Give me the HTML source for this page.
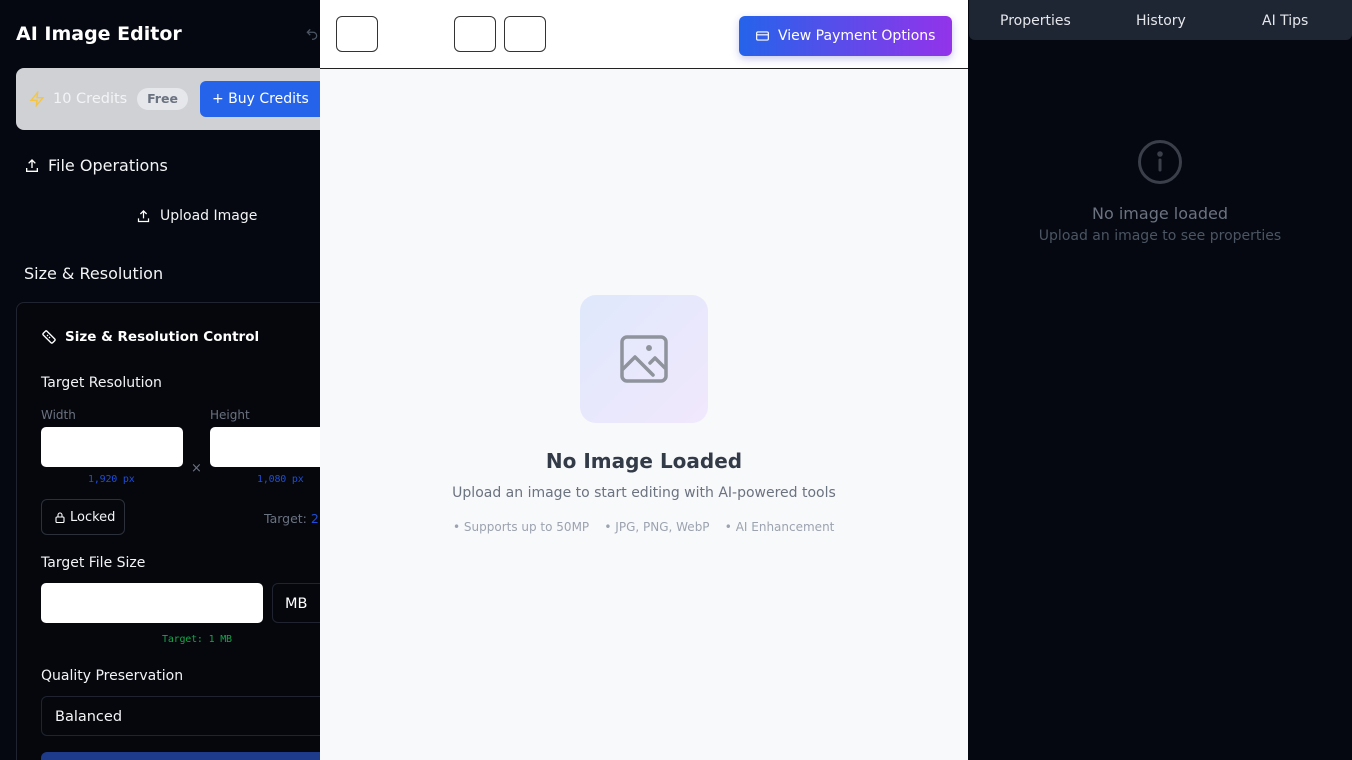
<!DOCTYPE html>
<html style="overflow:hidden;width:1352px;height:760px"><head><meta charset="utf-8"><style>
*{box-sizing:border-box;margin:0;padding:0}
body{width:1352px;height:760px;overflow:hidden;background:#050810;font-family:"DejaVu Sans","Liberation Sans",sans-serif;position:relative;color:#e5e7eb}
.a{position:absolute;white-space:nowrap}
#left{position:absolute;left:0;top:0;width:320px;height:760px;overflow:hidden}
</style></head><body>
<div id="left">
<div class="a" style="left:16px;top:23px;font-size:19px;font-weight:bold;color:#fff">AI Image Editor</div>
<svg class="a" style="left:305px;top:27px" width="14" height="14" viewBox="0 0 24 24" fill="none" stroke="#4b5563" stroke-width="2.2"><path d="M9 14L4 9l5-5"/><path d="M4 9h10a6 6 0 010 12h-2"/></svg>
<div class="a" style="left:16px;top:68px;width:330px;height:62px;background:#cfd1d5;border-radius:8px"></div>
<svg class="a" style="left:29px;top:91px" width="16" height="16" viewBox="0 0 24 24" fill="none" stroke="#f5c542" stroke-width="2"><path d="M13 2L3 14h9l-1 8 10-12h-9l1-8z"/></svg>
<div class="a" style="left:53px;top:91px;font-size:14.5px;color:#f3f4f6">10 Credits</div>
<div class="a" style="left:137px;top:88px;width:51px;height:22px;border-radius:11px;background:#e5e7eb;color:#6b7280;font-size:12.5px;font-weight:bold;text-align:center;line-height:22px">Free</div>
<div class="a" style="left:200px;top:81px;width:140px;height:36px;border-radius:6px;background:#2563eb;color:#fff;font-size:14px;line-height:36px;padding-left:12px">+ Buy Credits</div>
<svg class="a" style="left:24px;top:158px" width="16" height="16" viewBox="0 0 24 24" fill="none" stroke="#fff" stroke-width="2"><path d="M12 15V3M7 8l5-5 5 5M4 15v5h16v-5"/></svg>
<div class="a" style="left:48px;top:156px;font-size:16px;color:#f3f4f6">File Operations</div>
<svg class="a" style="left:136px;top:209px" width="15" height="15" viewBox="0 0 24 24" fill="none" stroke="#fff" stroke-width="2"><path d="M12 15V3M7 8l5-5 5 5M4 15v5h16v-5"/></svg>
<div class="a" style="left:160px;top:208px;font-size:14px;color:#f3f4f6">Upload Image</div>
<div class="a" style="left:24px;top:264px;font-size:16px;color:#f3f4f6">Size &amp; Resolution</div>
<div class="a" style="left:16px;top:302px;width:330px;height:480px;border:1px solid #1f2430;border-radius:8px;background:#05070d"></div>
<svg class="a" style="left:41px;top:329px" width="16" height="16" viewBox="0 0 24 24" fill="none" stroke="#fff" stroke-width="2"><rect x="2" y="8" width="20" height="8" rx="2" transform="rotate(45 12 12)"/><path d="M9 9l1.5 1.5M12 12l1.5 1.5"/></svg>
<div class="a" style="left:65px;top:329px;font-size:13.5px;font-weight:bold;color:#fff">Size &amp; Resolution Control</div>
<div class="a" style="left:41px;top:375px;font-size:14px;color:#f3f4f6">Target Resolution</div>
<div class="a" style="left:41px;top:408px;font-size:12px;color:#6b7280">Width</div>
<div class="a" style="left:210px;top:408px;font-size:12px;color:#6b7280">Height</div>
<div class="a" style="left:41px;top:427px;width:142px;height:40px;background:#fff;border-radius:5px"></div>
<div class="a" style="left:210px;top:427px;width:130px;height:40px;background:#fff;border-radius:5px"></div>
<div class="a" style="left:191px;top:461px;font-size:13px;color:#6b7280">×</div>
<div class="a" style="left:88px;top:474px;font-size:10px;color:#1d4ed8;font-family:'DejaVu Sans Mono',monospace;letter-spacing:-0.2px">1,920 px</div>
<div class="a" style="left:257px;top:474px;font-size:10px;color:#1d4ed8;font-family:'DejaVu Sans Mono',monospace;letter-spacing:-0.2px">1,080 px</div>
<div class="a" style="left:41px;top:499px;width:84px;height:36px;border:1px solid #2b303b;border-radius:6px"></div>
<svg class="a" style="left:54px;top:511px" width="12" height="13" viewBox="0 0 24 24" fill="none" stroke="#fff" stroke-width="2.2"><rect x="4" y="11" width="16" height="11" rx="2"/><path d="M8 11V7a4 4 0 018 0v4"/></svg>
<div class="a" style="left:70px;top:510px;font-size:13px;color:#f3f4f6">Locked</div>
<div class="a" style="left:264px;top:511px;font-size:12.5px;color:#6b7280">Target: <span style="color:#1d4ed8">2.</span></div>
<div class="a" style="left:41px;top:555px;font-size:14px;color:#f3f4f6">Target File Size</div>
<div class="a" style="left:41px;top:583px;width:222px;height:40px;background:#fff;border-radius:5px"></div>
<div class="a" style="left:272px;top:583px;width:80px;height:40px;border:1px solid #1f2430;border-radius:6px;font-size:14.5px;color:#fff;line-height:40px;padding-left:12px">MB</div>
<div class="a" style="left:162px;top:634px;font-size:10px;color:#16a34a;font-family:'DejaVu Sans Mono',monospace;letter-spacing:-0.2px">Target: 1 MB</div>
<div class="a" style="left:41px;top:668px;font-size:14px;color:#f3f4f6">Quality Preservation</div>
<div class="a" style="left:41px;top:696px;width:310px;height:40px;border:1px solid #1f2430;border-radius:6px;font-size:14.5px;color:#f3f4f6;line-height:40px;padding-left:13px">Balanced</div>
<div class="a" style="left:41px;top:752px;width:310px;height:20px;background:#1e3a8a;border-radius:6px"></div>
</div>
<!-- middle -->
<div class="a" style="left:320px;top:0;width:648px;height:760px;background:#f8f9fb"></div>
<div class="a" style="left:320px;top:0;width:648px;height:69px;background:#fff;border-bottom:1px solid #222"></div>
<div class="a" style="left:336px;top:16px;width:42px;height:36px;border:1px solid #333;border-radius:6px"></div>
<div class="a" style="left:454px;top:16px;width:42px;height:36px;border:1px solid #333;border-radius:6px"></div>
<div class="a" style="left:504px;top:16px;width:42px;height:36px;border:1px solid #333;border-radius:6px"></div>
<div class="a" style="left:739px;top:16px;width:213px;height:40px;border-radius:6px;background:linear-gradient(90deg,#2563eb,#9333ea);box-shadow:0 3px 8px rgba(80,80,200,.3);color:#fff;font-size:14px;line-height:40px;padding-left:39px">View Payment Options</div>
<svg class="a" style="left:755px;top:29px" width="15" height="14" viewBox="0 0 24 24" fill="none" stroke="#fff" stroke-width="2"><rect x="2" y="5" width="20" height="14" rx="2"/><path d="M2 10h20"/></svg>
<div class="a" style="left:580px;top:295px;width:128px;height:128px;border-radius:16px;background:linear-gradient(135deg,#dfe8fc,#f1e8fc)"></div>
<svg class="a" style="left:620px;top:335px" width="48" height="48" viewBox="0 0 48 48" fill="none" stroke="#8e939c" stroke-width="3.5" stroke-linecap="round" stroke-linejoin="round"><rect x="2" y="2" width="44" height="44" rx="5"/><circle cx="29" cy="13" r="1.2" fill="#8e939c"/><path d="M3 34l12-12 18 18M30 28l5-5 10 10"/></svg>
<div class="a" style="left:320px;width:648px;text-align:center;top:449px;font-size:20px;font-weight:bold;color:#343b48">No Image Loaded</div>
<div class="a" style="left:320px;width:648px;text-align:center;top:485px;font-size:14px;color:#6b7280">Upload an image to start editing with AI-powered tools</div>
<div class="a" style="left:453px;top:520px;font-size:12px;color:#9ca3af">• Supports up to 50MP&nbsp;&nbsp;&nbsp;&nbsp;• JPG, PNG, WebP&nbsp;&nbsp;&nbsp;&nbsp;• AI Enhancement</div>
<!-- right -->
<div class="a" style="left:969px;top:0;width:383px;height:40px;background:#1e2533;border-radius:0 0 6px 6px"></div>
<div class="a" style="left:1000px;top:13px;font-size:14px;color:#e5e7eb">Properties</div>
<div class="a" style="left:1136px;top:13px;font-size:14px;color:#e5e7eb">History</div>
<div class="a" style="left:1262px;top:13px;font-size:14px;color:#e5e7eb">AI Tips</div>
<svg class="a" style="left:1137px;top:139px" width="46" height="46" viewBox="0 0 46 46" fill="none" stroke="#3a3f49" stroke-width="3"><circle cx="23" cy="23" r="20.5"/><path d="M23 21v10" stroke-linecap="round"/><circle cx="23" cy="15" r="1.3" fill="#3a3f49"/></svg>
<div class="a" style="left:968px;width:384px;text-align:center;top:204px;font-size:16px;color:#6b7280">No image loaded</div>
<div class="a" style="left:968px;width:384px;text-align:center;top:228px;font-size:14px;color:#4b5563">Upload an image to see properties</div>
</body></html>
